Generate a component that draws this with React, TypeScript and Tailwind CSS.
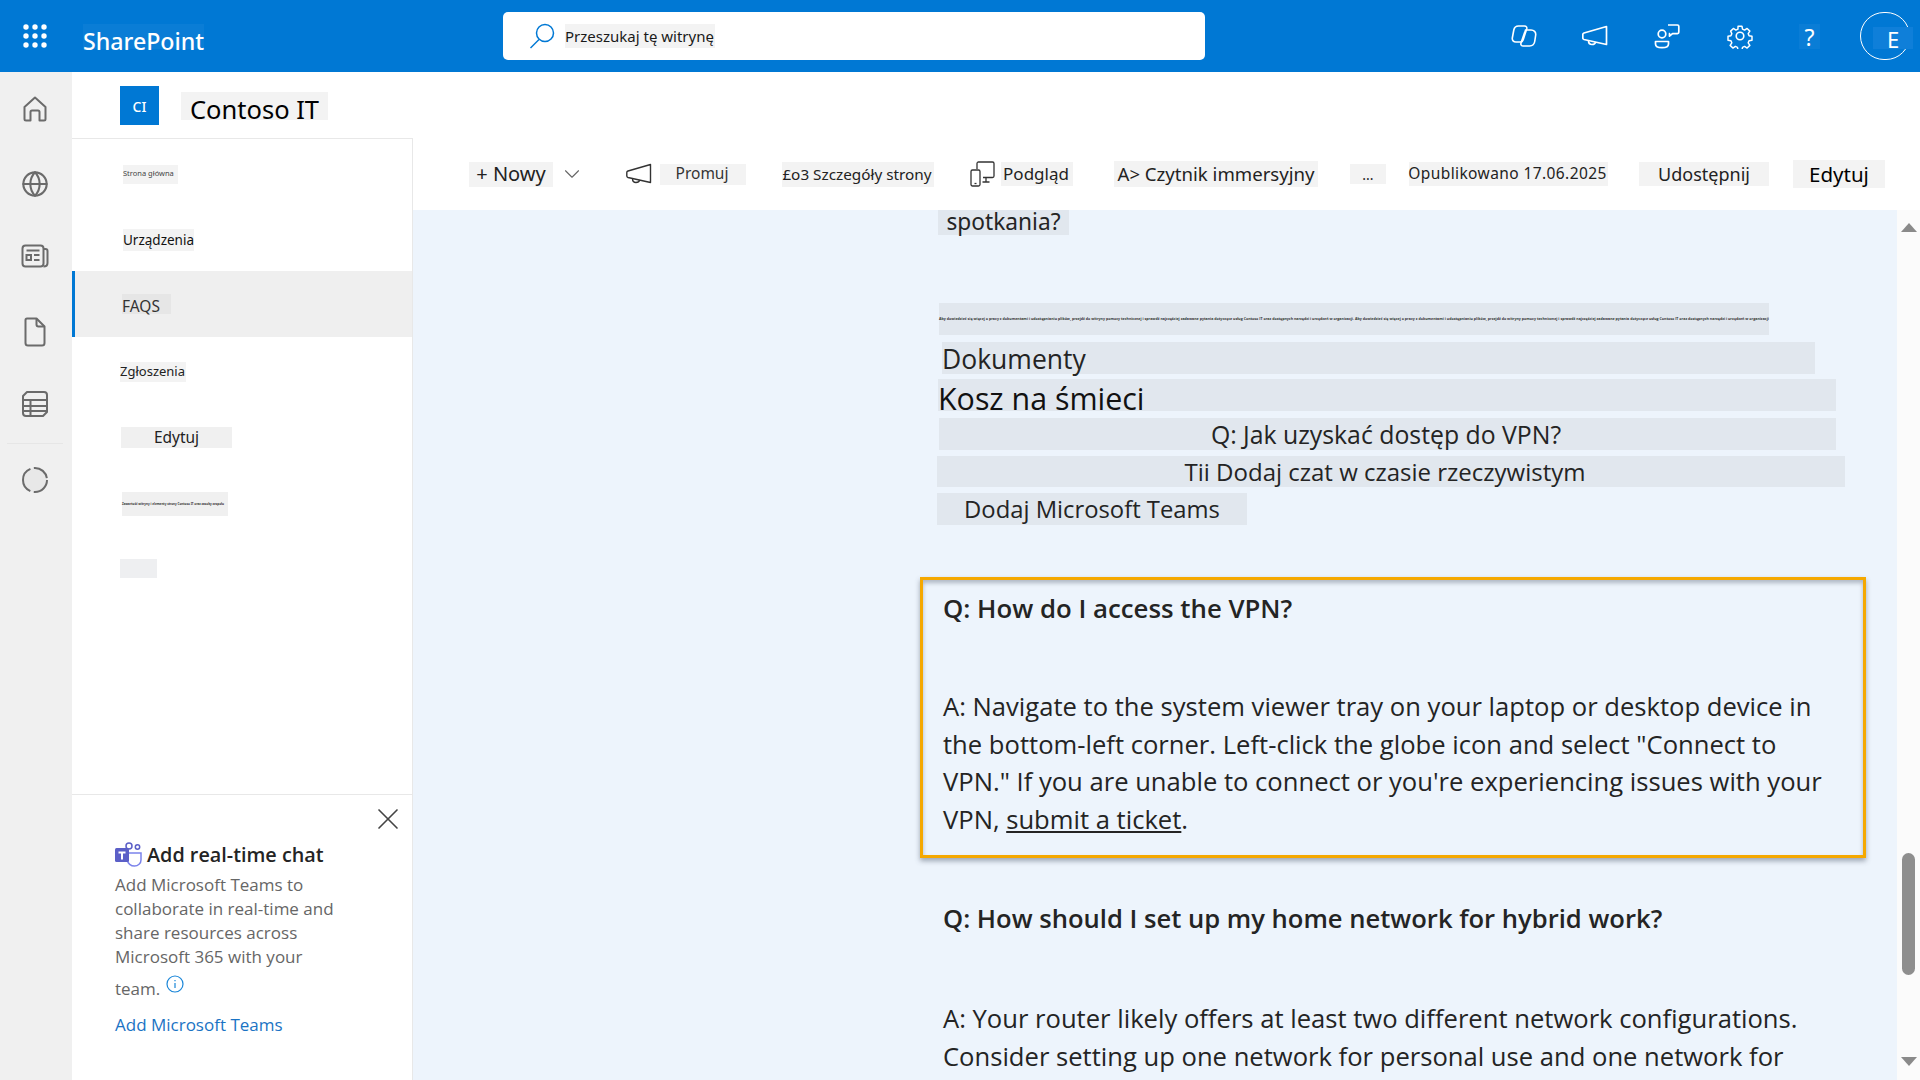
import { Globe, ChevronDown, X } from 'lucide-react';

const NOTO = "font-['Noto_Sans',sans-serif]";

function GridDots() {
  const dots = [];
  for (let y = 0; y < 3; y++) {
    for (let x = 0; x < 3; x++) {
      dots.push(<circle key={`${x}-${y}`} cx={3 + x * 9} cy={3 + y * 9} r={2.7} fill="#fff" />);
    }
  }
  return (
    <svg width="24" height="24" viewBox="0 0 24 24">
      {dots}
    </svg>
  );
}

function HeaderIcons() {
  return (
    <div className="flex items-center">
      {/* copilot */}
      <svg width="26" height="24" viewBox="0 0 26 24" fill="none" stroke="#fff" strokeWidth="1.6" strokeLinejoin="round">
        <path d="M7.5 2h6c1.8 0 2.700 1.300 2.200 3l-3.600 11c-.4 1.200-1.400 2-2.600 2H5C2.500 18 1 16.300 1.300 14L2.800 6C3.300 3.500 5 2 7.500 2Z" />
        <path d="M14.500 6H20c3 0 5 2 4.700 5l-.9 6c-.4 3-2.400 5-5.300 5h-6.300c-1.800 0-2.700-1.300-2.200-3l3.800-11c.3-1.200.9-2 1.200-2Z" />
      </svg>
      {/* feedback megaphone */}
      <svg className="ml-[45px]" width="26" height="22" viewBox="0 0 26 22" fill="none" stroke="#fff" strokeWidth="1.7" strokeLinejoin="round">
        <path d="M24.500 1.500v18L2 14.500c-1-.3-1.200-.8-1.200-1.500V9.500c0-.7.4-1.200 1.200-1.500Z" />
        <path d="M6.500 15.500c0 2.500 1.500 4 3.500 4s3.300-1 3.700-2.500" />
      </svg>
      {/* people with chat bubble */}
      <svg className="ml-[46px]" width="26" height="26" viewBox="0 0 26 26" fill="none" stroke="#fff" strokeWidth="1.7" strokeLinejoin="round">
        <circle cx="8" cy="11" r="3.8" />
        <path d="M1.500 18.500h13v2.500c0 2.200-2.600 3.700-6.500 3.700s-6.500-1.500-6.500-3.700Z" />
        <path d="M14 2h9.500c.8 0 1.300.5 1.300 1.300v6c0 .8-.5 1.300-1.300 1.300h-5l-3 2.500v-2.500H14.800" />
      </svg>
      {/* settings */}
      <svg className="ml-[47px]" width="26" height="26" viewBox="0 0 24 24" fill="none" stroke="#fff" strokeWidth="1.5" strokeLinejoin="round">
        <circle cx="12" cy="12" r="3.5" />
        <path d="M10 2h4l.6 3 2.100.9 2.600-1.700 2.800 2.800-1.700 2.600.9 2.100 3 .6v4l-3 .6-.9 2.100 1.700 2.600-2.800 2.800-2.600-1.700-2.100.9-.6 3h-4l-.6-3-2.100-.9-2.600 1.700-2.800-2.800 1.700-2.600-.9-2.100-3-.6v-4l3-.6.9-2.100L2.400 7l2.800-2.800 2.600 1.700 2.100-.9Z" transform="translate(1.2 1.2) scale(.9)" />
      </svg>
    </div>
  );
}

function Header() {
  return (
    <div className={`flex h-[72px] shrink-0 items-center bg-[#0078d4] ${NOTO}`}>
      <div className="ml-[23px]">
        <GridDots />
      </div>
      <div className="ml-[36px] mt-[1px] flex h-[25px] w-[121px] items-center whitespace-nowrap bg-[#0a7dd6] pt-[9px] text-[23.2px] font-medium text-white">
        SharePoint
      </div>
      <div className="ml-[299px] flex h-[48px] w-[702px] items-center rounded-[5px] bg-white pl-[26px]">
        <svg width="26" height="26" viewBox="0 0 26 26" fill="none" stroke="#0078d4" strokeWidth="1.5">
          <circle cx="16" cy="10" r="8.5" />
          <path d="M10 16.500 1.500 25" />
        </svg>
        <span className="ml-[10px] flex h-[24px] w-[150px] items-center whitespace-nowrap bg-[#f3f3f3] pt-[1px] text-[15px] text-[#1a1a1a]">
          Przeszukaj tę witrynę
        </span>
      </div>
      <div className="ml-[306px]">
        <HeaderIcons />
      </div>
      <div className="ml-[46px] flex h-[25px] w-[21px] items-center justify-center bg-[#0a7dd6] pt-[2px] text-[23px] text-white">
        ?
      </div>
      <div className="relative ml-[40px] h-[48px] w-[50px] rounded-full border border-white">
        <span className="absolute left-[12px] top-[14px] flex h-[22px] w-[40px] items-center justify-center bg-[#0f7fd9] pt-[3px] text-[22px] text-white">
          E
        </span>
      </div>
    </div>
  );
}

function RailIcons() {
  const stroke = '#6b6b6b';
  return (
    <div className="flex w-[72px] shrink-0 flex-col items-center bg-[#f0f0f0] pr-[2px] pt-[23px]">
      <svg width="28" height="28" viewBox="0 0 28 28" fill="none" stroke={stroke} strokeWidth="2" strokeLinejoin="round">
        <path d="M3.500 12 14 2.500 24.500 12v12c0 1-.7 1.500-1.500 1.500h-4.500V17c0-1-.7-1.500-1.500-1.500h-6c-.8 0-1.500.5-1.500 1.500v8.500H5c-.8 0-1.500-.5-1.500-1.500Z" />
      </svg>
      <Globe className="mt-[47px]" size={28} color={stroke} strokeWidth={1.8} />
      <svg className="mt-[44px]" width="28" height="28" viewBox="0 0 28 28" fill="none" stroke={stroke} strokeWidth="2">
        <rect x="1.5" y="3.5" width="21" height="21" rx="3" />
        <path d="M22.500 7h2c1 0 2 .8 2 2v12c0 2-1.500 3.500-4 3.500" />
        <path d="M5.500 8.500h13M13 13h5.500M13 18h5.500" />
        <rect x="5.5" y="13" width="4.5" height="5" />
      </svg>
      <svg className="mt-[47px]" width="24" height="30" viewBox="0 0 24 30" fill="none" stroke={stroke} strokeWidth="2" strokeLinejoin="round">
        <path d="M4 1.500h9.500l8 8V26c0 1.500-1 2.500-2.500 2.500H5c-1.500 0-2.500-1-2.500-2.500V3c0-1 .5-1.500 1.500-1.500Z" />
        <path d="M13.500 1.500v6c0 1.200.8 2 2 2h6" />
      </svg>
      <svg className="mt-[43px]" width="28" height="28" viewBox="0 0 28 28" fill="none" stroke={stroke} strokeWidth="2" strokeLinejoin="round">
        <path d="M6 2h17c1.500 0 3 1 3 3v17l-4 4H5c-1.500 0-3-1-3-3V6Z" />
        <path d="M2 10h24M2 16h24M2 21h24M9.500 10v16" />
      </svg>
      <div className="mt-[25px] h-px w-[56px] bg-[#e6e6e6]" />
      <svg className="mt-[22px]" width="28" height="28" viewBox="0 0 28 28" fill="#e8e8e8" stroke={stroke} strokeWidth="2">
        <circle cx="14" cy="14" r="12" strokeDasharray="20 3.5 28 3.5 18 3" />
      </svg>
    </div>
  );
}

function TeamsIcon() {
  return (
    <svg width="27" height="25" viewBox="0 0 27 25">
      <circle cx="14" cy="4" r="3" fill="none" stroke="#5b5fc7" strokeWidth="1.5" />
      <circle cx="22.5" cy="5" r="2.2" fill="none" stroke="#5b5fc7" strokeWidth="1.5" />
      <path d="M10 11h16v7c0 3.500-3 6-6.500 6s-7-2.500-7-6" fill="none" stroke="#7b83eb" strokeWidth="1.5" />
      <rect x="0" y="6" width="14" height="14" rx="1.5" fill="#5b5fc7" />
      <path d="M3.500 9.500h7v2H8v6H6v-6H3.500Z" fill="#fff" />
    </svg>
  );
}

function SideNav() {
  return (
    <div className={`flex h-[942px] w-[341px] shrink-0 flex-col border-r border-t border-[#e8e8e8] bg-white ${NOTO}`}>
      <div className="flex h-[132px] shrink-0 flex-col items-start pl-[51px]">
        <span className="mt-[26px] flex h-[19px] w-[55px] items-center whitespace-nowrap bg-[#f3f3f3] pb-[1px] text-[7.5px] text-[#444]">
          Strona główna
        </span>
        <span className="mt-[45px] flex h-[22px] w-[71px] items-center whitespace-nowrap bg-[#f3f3f3] text-[13.5px] text-[#111]">
          Urządzenia
        </span>
      </div>
      <div className="flex h-[66px] shrink-0 items-center border-l-[3px] border-[#0078d4] bg-[#efefef] pl-[47px]">
        <span className="flex h-[20px] w-[49px] items-center bg-[#e6e6e6] pt-[6px] text-[15.5px] text-[#333]">FAQS</span>
      </div>
      <div className="flex flex-col items-start pl-[48px]">
        <span className="mt-[25px] flex h-[20px] w-[66px] items-center whitespace-nowrap bg-[#f3f3f3] text-[13px] text-[#222]">
          Zgłoszenia
        </span>
        <span className="ml-px mt-[45px] flex h-[21px] w-[111px] items-center justify-center bg-[#f0f0f0] pt-[1px] text-[15.5px] text-[#222]">
          Edytuj
        </span>
        <span className="ml-[2px] mt-[44px] flex h-[24px] w-[106px] items-center whitespace-nowrap bg-[#f0f0f0] text-[3px] font-bold text-[#333]">
          Zawartość witryny i elementy strony Contoso IT oraz zasoby zespołu
        </span>
        <span className="mt-[43px] h-[19px] w-[37px] bg-[#eeeff1]" />
      </div>
      <div className="mt-auto h-[286px] border-t border-[#e8e8e8] pl-[43px] font-['Open_Sans',sans-serif]">
        <div className="flex justify-end pr-[6px] pt-[6px]">
          <X size={36} color="#444" strokeWidth={1.1} />
        </div>
        <div className="mt-[3px] flex items-center gap-[5px]">
          <TeamsIcon />
          <span className="text-[19.8px] font-semibold text-[#242424]">Add real-time chat</span>
        </div>
        <p className="mt-[3px] w-[244px] text-[17px] leading-[24px] text-[#666]">
          Add Microsoft Teams to collaborate in real-time and share resources across Microsoft 365 with your
        </p>
        <div className="mt-[7px] flex items-start text-[17px] text-[#666]">
          team.
          <svg className="ml-[6px] mt-[-1px]" width="18" height="18" viewBox="0 0 18 18" fill="none" stroke="#1a86d8" strokeWidth="1.2">
            <circle cx="9" cy="9" r="8" />
            <path d="M9 8v5M9 5v1.3" />
          </svg>
        </div>
        <div className="mt-[11px] text-[17px] text-[#1a73c4]">Add Microsoft Teams</div>
      </div>
    </div>
  );
}

function CommandBar() {
  return (
    <div className={`flex h-[72px] shrink-0 items-center bg-white text-[#222] ${NOTO}`}>
      <span className="ml-[56px] flex h-[25px] w-[84px] items-center justify-center whitespace-nowrap bg-[#f3f3f3] text-[20px]">+ Nowy</span>
      <ChevronDown className="ml-[6px]" size={26} color="#666" strokeWidth={1} />
      <svg className="ml-[41px]" width="26" height="22" viewBox="0 0 26 22" fill="none" stroke="#333" strokeWidth="1.4" strokeLinejoin="round">
        <path d="M24.500 1.500v18L2 14.500c-1-.3-1.200-.8-1.200-1.500V9.500c0-.7.4-1.200 1.200-1.500Z" />
        <path d="M6.500 15.500c0 2.500 1.500 4 3.500 4s3.300-1 3.700-2.500" />
      </svg>
      <span className="ml-[8px] flex h-[21px] w-[86px] items-center justify-center bg-[#f3f3f3] pr-[2px] text-[15.5px] text-[#333]">Promuj</span>
      <span className="ml-[36px] flex h-[25px] w-[152px] items-center justify-center whitespace-nowrap bg-[#f3f3f3] pr-[2px] text-[15.3px]">
        £o3 Szczegóły strony
      </span>
      <svg className="ml-[36px]" width="25" height="26" viewBox="0 0 25 26" fill="none" stroke="#333" strokeWidth="1.3">
        <path d="M7 8V2.500C7 1.500 7.700 1 8.500 1h14c.8 0 1.500.5 1.500 1.500V15c0 1-.7 1.500-1.500 1.500H13" />
        <path d="M16 16.500V21M12.500 21h7" />
        <rect x="1" y="9" width="9" height="16" rx="1.5" />
        <path d="M4.500 22.500h2" />
      </svg>
      <span className="ml-[6px] flex h-[24px] w-[72px] items-center justify-center whitespace-nowrap bg-[#f3f3f3] pr-[2px] text-[17px]">Podgląd</span>
      <span className="ml-[41px] flex h-[26px] w-[204px] items-center justify-center whitespace-nowrap bg-[#f3f3f3] text-[18.6px]">
        A&gt; Czytnik immersyjny
      </span>
      <span className="ml-[32px] flex h-[20px] w-[36px] items-center justify-center bg-[#f3f3f3] text-[14px]">...</span>
      <span className="ml-[23px] flex h-[24px] w-[199px] items-center justify-center whitespace-nowrap bg-[#f3f3f3] pr-[2px] text-[15.5px] tracking-[0.4px]">
        Opublikowano 17.06.2025
      </span>
      <span className="ml-[31px] flex h-[24px] w-[130px] items-center justify-center bg-[#f3f3f3] text-[18px]">Udostępnij</span>
      <span className="ml-[24px] flex h-[28px] w-[92px] items-center justify-center bg-[#f3f3f3] text-[20.5px] text-black">Edytuj</span>
    </div>
  );
}

function Article() {
  return (
    <div className="h-[870px] w-[1484px] overflow-hidden bg-[#edf4fc] text-[#242424] font-['Open_Sans',sans-serif]">
      <div className="flex flex-col items-start pl-[525px]">
        <span className={`flex h-[25px] w-[131px] items-center justify-center whitespace-nowrap bg-[#e1e7ee] text-[22.7px] leading-none ${NOTO}`}>spotkania?</span>
        <span className="ml-px mt-[68px] flex h-[32px] w-[830px] items-center whitespace-nowrap bg-[#e1e7ee] text-[3.6px] font-bold text-[#333]">
          Aby dowiedzieć się więcej o pracy z dokumentami i udostępnianiu plików, przejdź do witryny pomocy technicznej i sprawdź najczęściej zadawane pytania dotyczące usług Contoso IT oraz dostępnych narzędzi i urządzeń w organizacji. Aby dowiedzieć się więcej o pracy z dokumentami i udostępnianiu plików, przejdź do witryny pomocy technicznej i sprawdź najczęściej zadawane pytania dotyczące usług Contoso IT oraz dostępnych narzędzi i urządzeń w organizacji
        </span>
        <span className="ml-[4px] mt-[7px] flex h-[32px] w-[873px] items-center bg-[#e1e7ee] pt-[4px] text-[26.5px]">Dokumenty</span>
        <span className="mt-[5px] flex h-[32px] w-[898px] items-center bg-[#e1e7ee] pt-[8px] text-[30.4px] text-[#111]">Kosz na śmieci</span>
        <span className="ml-px mt-[7px] flex h-[32px] w-[897px] items-center justify-center whitespace-nowrap bg-[#e1e7ee] pr-[3px] pt-[2px] text-[24.8px]">Q: Jak uzyskać dostęp do VPN?</span>
        <span className="ml-[-1px] mt-[6px] flex h-[31px] w-[908px] items-center justify-center whitespace-nowrap bg-[#e1e7ee] pr-[12px] text-[24px]">Tii Dodaj czat w czasie rzeczywistym</span>
        <span className="ml-[-1px] mt-[6px] flex h-[32px] w-[310px] items-center justify-center whitespace-nowrap bg-[#e1e7ee] pt-[2px] text-[23.8px]">Dodaj Microsoft Teams</span>
      </div>
      <div className="ml-[507px] mt-[52px] h-[281px] w-[946px] border-[3px] border-[#f5a800] pl-[20px] pr-[14px] pt-[10px] shadow-[0_3px_5px_rgba(60,70,90,0.45),inset_0_3px_4px_rgba(60,70,90,0.35)]">
        <p className="text-[25.8px] font-semibold leading-[36px]">Q: How do I access the VPN?</p>
        <p className="mt-[62px] text-[25.6px] leading-[37.5px]">
          A: Navigate to the system viewer tray on your laptop or desktop device in the bottom-left corner. Left-click the globe icon and select "Connect to VPN." If you are unable to connect or you're experiencing issues with your VPN, <span className="underline">submit a ticket</span>.
        </p>
      </div>
      <div className="ml-[530px] mt-[43px] w-[906px]">
        <p className="text-[25.6px] font-semibold leading-[36px]">Q: How should I set up my home network for hybrid work?</p>
        <p className="mt-[63px] text-[25.6px] leading-[37.5px]">
          A: Your router likely offers at least two different network configurations. Consider setting up one network for personal use and one network for
        </p>
      </div>
    </div>
  );
}

function Scrollbar() {
  return (
    <div className="flex h-[870px] w-[23px] shrink-0 flex-col items-center bg-[#fbfbfb]">
      <div className="mt-[13px] h-0 w-0 border-x-[8px] border-b-[9px] border-x-transparent border-b-[#8a8a8a]" />
      <div className="mt-[621px] h-[122px] w-[13px] rounded-full bg-[#8e8e8e]" />
      <div className="mt-[82px] h-0 w-0 border-x-[8px] border-t-[9px] border-x-transparent border-t-[#8a8a8a]" />
    </div>
  );
}

export default function App() {
  return (
    <div className="flex h-[1080px] w-[1920px] flex-col overflow-hidden bg-white">
      <Header />
      <div className="flex min-h-0 flex-1">
        <RailIcons />
        <div className="flex min-w-0 flex-1 flex-col">
          <div className={`flex h-[66px] shrink-0 items-start bg-white ${NOTO}`}>
            <div className="ml-[48px] mt-[14px] flex h-[39px] w-[39px] items-center justify-center bg-[#0078d4] pt-[2px] text-[14px] font-medium text-white">
              CI
            </div>
            <div className="ml-[22px] mt-[20px] flex h-[28px] w-[147px] items-center whitespace-nowrap bg-[#f3f3f3] pl-[9px] pt-[7px] text-[25.5px] text-black">
              Contoso IT
            </div>
          </div>
          <div className="flex min-h-0 flex-1">
            <SideNav />
            <div className="flex min-w-0 flex-1 flex-col">
              <CommandBar />
              <div className="flex">
                <Article />
                <Scrollbar />
              </div>
            </div>
          </div>
        </div>
      </div>
    </div>
  );
}
